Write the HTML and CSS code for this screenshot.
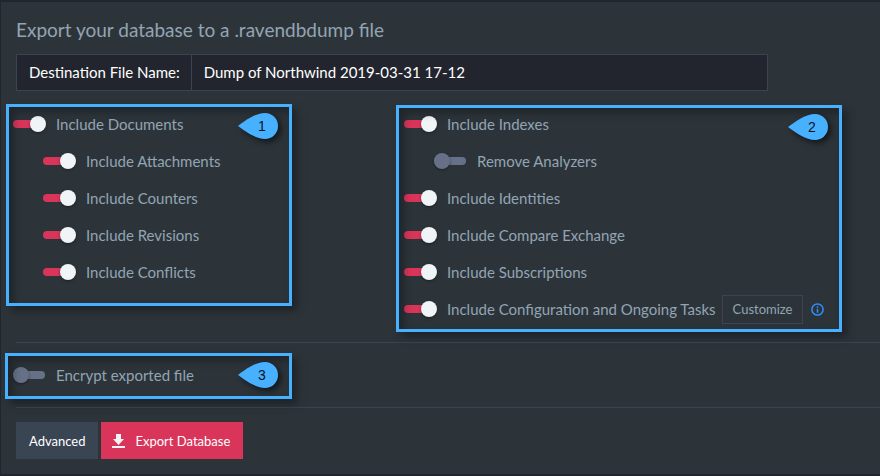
FILE: index.html
```html
<!DOCTYPE html>
<html lang="en">
<head>
<meta charset="utf-8">
<title>Export database</title>
<meta name="viewport" content="width=device-width, initial-scale=1">
<link rel="stylesheet" href="styles.css">
</head>
<body>
<form class="panel">
  <h1 class="title">Export your database to a .ravendbdump file</h1>

  <div class="file-name">
    <label for="fileName">Destination File Name:</label>
    <input type="text" id="fileName" value="Dump of Northwind 2019-03-31 17-12">
  </div>

  <div class="options">
    <div class="group">
      <div class="option"><input type="checkbox" class="toggle" id="documents" checked><label for="documents">Include Documents</label></div>
      <div class="option nested"><input type="checkbox" class="toggle" id="attachments" checked><label for="attachments">Include Attachments</label></div>
      <div class="option nested"><input type="checkbox" class="toggle" id="counters" checked><label for="counters">Include Counters</label></div>
      <div class="option nested"><input type="checkbox" class="toggle" id="revisions" checked><label for="revisions">Include Revisions</label></div>
      <div class="option nested"><input type="checkbox" class="toggle" id="conflicts" checked><label for="conflicts">Include Conflicts</label></div>
      <div class="highlight highlight-documents">
        <div class="callout">
          <svg viewBox="0 0 40 26" aria-hidden="true"><path d="M0 13C8 7 18 0 27 0a13 13 0 0 1 0 26C18 26 8 19 0 13z"/></svg>
          <span>1</span>
        </div>
      </div>
    </div>

    <div class="group">
      <div class="option"><input type="checkbox" class="toggle" id="indexes" checked><label for="indexes">Include Indexes</label></div>
      <div class="option nested"><input type="checkbox" class="toggle" id="analyzers"><label for="analyzers">Remove Analyzers</label></div>
      <div class="option"><input type="checkbox" class="toggle" id="identities" checked><label for="identities">Include Identities</label></div>
      <div class="option"><input type="checkbox" class="toggle" id="compare" checked><label for="compare">Include Compare Exchange</label></div>
      <div class="option"><input type="checkbox" class="toggle" id="subscriptions" checked><label for="subscriptions">Include Subscriptions</label></div>
      <div class="option">
        <input type="checkbox" class="toggle" id="configuration" checked><label for="configuration">Include Configuration and Ongoing Tasks</label>
        <button type="button" class="btn-outline">Customize</button>
        <svg class="info" viewBox="0 0 13 13" aria-hidden="true"><circle cx="6.5" cy="6.5" r="5.6"/><path d="M6.5 5.8v4M6.5 3.2v1.6"/></svg>
      </div>
      <div class="highlight highlight-indexes">
        <div class="callout">
          <svg viewBox="0 0 40 26" aria-hidden="true"><path d="M0 13C8 7 18 0 27 0a13 13 0 0 1 0 26C18 26 8 19 0 13z"/></svg>
          <span>2</span>
        </div>
      </div>
    </div>
  </div>

  <div class="group encryption">
    <div class="option"><input type="checkbox" class="toggle" id="encrypt"><label for="encrypt">Encrypt exported file</label></div>
    <div class="highlight highlight-encryption">
      <div class="callout">
        <svg viewBox="0 0 40 26" aria-hidden="true"><path d="M0 13C8 7 18 0 27 0a13 13 0 0 1 0 26C18 26 8 19 0 13z"/></svg>
        <span>3</span>
      </div>
    </div>
  </div>

  <div class="actions">
    <button type="button" class="btn">Advanced</button>
    <button type="submit" class="btn btn-primary">
      <svg viewBox="0 0 13 14" aria-hidden="true"><path d="M4 0h5v5h3L6.500 11 1 5h3zM0 12h13v2H0z"/></svg>
      Export Database
    </button>
  </div>
</form>
</body>
</html>
```
FILE: styles.css
```css
* {
  box-sizing: border-box;
}

body {
  margin: 0;
  padding: 2px 0 2px 1px;
  background: #22252e;
  color: #93a4b3;
  font: 15px/20px Lato, sans-serif;
}

button,
input {
  margin: 0;
  font: inherit;
}

.panel {
  padding: 16px 0 15px 15px;
  background: #2c343a;
}

.title {
  margin: 0 0 12px;
  font-size: 19px;
  font-weight: 400;
  line-height: 24px;
}

.file-name {
  display: flex;
  max-width: 752px;
  height: 37px;
  margin-bottom: 15px;
  border: 1px solid #3a4553;
  background: #22252e;
  color: #fff;
}

.file-name label {
  padding: 7px 11px 8px 12px;
  border-right: 1px solid #3a4553;
  white-space: nowrap;
}

.file-name input {
  flex: 1;
  min-width: 0;
  padding: 0 12px 2px;
  border: 0;
  outline: 0;
  background: none;
  color: inherit;
}

.options {
  display: grid;
  grid-template-columns: minmax(0, 391px) 1fr;
  align-items: start;
  padding-bottom: 14px;
  border-bottom: 1px solid #3a4553;
}

.group {
  position: relative;
}

.option {
  display: flex;
  align-items: center;
  height: 37px;
  margin-left: -3px;
  padding-bottom: 1px;
  white-space: nowrap;
}

.nested {
  margin-left: 27px;
}

.toggle {
  appearance: none;
  display: flex;
  align-items: center;
  position: relative;
  flex: none;
  width: 33px;
  height: 16px;
  margin-right: 10px;
}

.toggle::before {
  content: "";
  width: 32px;
  height: 8px;
  border-radius: 4px;
  background: #667188;
}

.toggle::after {
  content: "";
  position: absolute;
  top: 0;
  left: 0;
  width: 16px;
  height: 16px;
  border-radius: 50%;
  background: #667188;
  box-shadow: 0 1px 3px rgba(0, 0, 0, 0.4);
}

.toggle:checked::before {
  background: #d9355b;
}

.toggle:checked::after {
  left: 17px;
  background: #f0f4f6;
}

.btn-outline {
  height: 29px;
  margin: 0 8px 0 6px;
  padding: 0 10px;
  border: 1px solid #3a4553;
  background: none;
  color: inherit;
  font-size: 13px;
}

.info {
  width: 13px;
  height: 13px;
  fill: none;
  stroke: #2f8fff;
  stroke-width: 1.5;
}

.encryption {
  padding: 14px 0 13px;
  border-bottom: 1px solid #3a4553;
}

.highlight {
  position: absolute;
  border: 3px solid #48b1ff;
  box-shadow: 5px 5px 8px rgba(0, 0, 0, 0.35), inset 5px 5px 8px rgba(0, 0, 0, 0.3);
  pointer-events: none;
}

.highlight-documents {
  top: -2px;
  bottom: -15px;
  left: -10px;
  width: 286px;
}

.highlight-indexes {
  top: -1px;
  bottom: -4px;
  left: -11px;
  width: 446px;
}

.highlight-encryption {
  top: 10px;
  bottom: 8px;
  left: -11px;
  width: 287px;
}

.callout {
  position: absolute;
  top: 6px;
  right: 11px;
  width: 40px;
  height: 26px;
  color: #0b1218;
  font: 14px/26px "Liberation Sans", sans-serif;
}

.callout svg {
  position: absolute;
  width: 40px;
  height: 26px;
  overflow: visible;
  fill: #48b1ff;
  filter: drop-shadow(3px 3px 3px rgba(0, 0, 0, 0.6));
}

.callout span {
  position: relative;
  display: block;
  padding-left: 8px;
  text-align: center;
}

.actions {
  display: flex;
  gap: 3px;
  padding-top: 14px;
}

.btn {
  display: flex;
  align-items: center;
  gap: 10px;
  height: 37px;
  padding: 0 13px;
  border: 0;
  background: #3a4553;
  color: #fff;
  font-size: 13px;
}

.btn-primary {
  padding: 0 13px 0 11px;
  background: #d9355b;
}

.btn svg {
  width: 13px;
  height: 14px;
  fill: #f0f4f6;
}
```
